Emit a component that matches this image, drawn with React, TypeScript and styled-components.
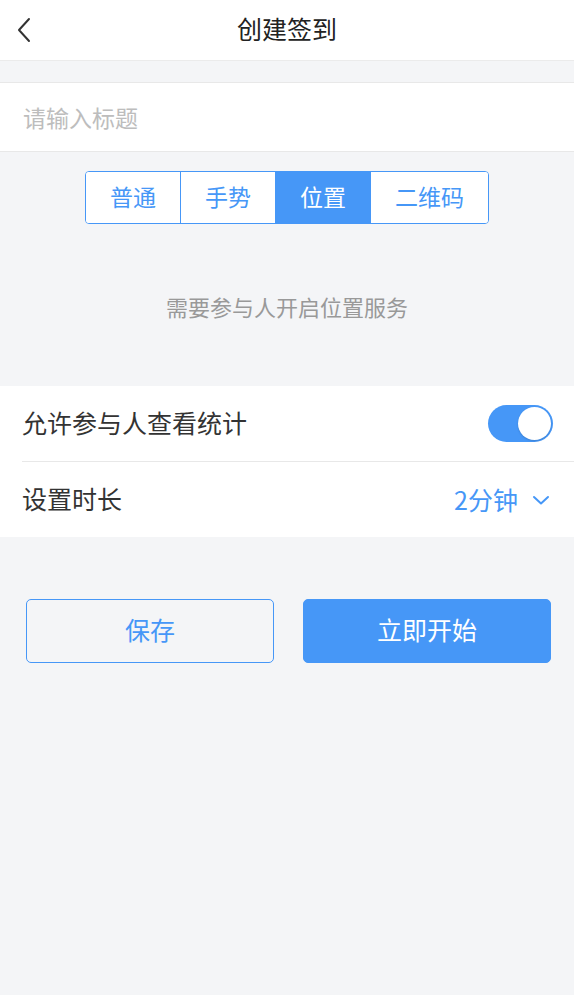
import React, { useState } from 'react';
import styled, { createGlobalStyle } from 'styled-components';

const GlobalStyle = createGlobalStyle`
  html, body {
    margin: 0;
    padding: 0;
    background: #f4f5f7;
    font-family: "Noto Sans CJK SC", "Noto Sans", sans-serif;
  }
`;

const BLUE = '#4697f7';

const tabs = ['普通', '手势', '位置', '二维码'];

const App: React.FC = () => {
  const [active, setActive] = useState(2);
  const [allowStats, setAllowStats] = useState(true);

  return (
    <Page>
      <GlobalStyle />
      <Header>
        <BackButton>
          <svg width="16" height="26" viewBox="0 0 16 26" fill="none">
            <path d="M13 2 L3 13 L13 24" stroke="#333" strokeWidth="2" strokeLinecap="round" strokeLinejoin="round" />
          </svg>
        </BackButton>
        <Title>创建签到</Title>
      </Header>

      <Spacer />

      <InputRow>
        <TitleInput placeholder="请输入标题" />
      </InputRow>

      <TabsWrap>
        <Segmented>
          {tabs.map((t, i) => (
            <Segment key={t} $active={i === active} onClick={() => setActive(i)}>
              {t}
            </Segment>
          ))}
        </Segmented>
      </TabsWrap>

      <Hint>需要参与人开启位置服务</Hint>

      <Section>
        <Row>
          <RowLabel>允许参与人查看统计</RowLabel>
          <Toggle $on={allowStats} onClick={() => setAllowStats(!allowStats)}>
            <Knob />
          </Toggle>
        </Row>
        <Row $last>
          <RowLabel>设置时长</RowLabel>
          <RowValue>
            2分钟
            <svg width="18" height="12" viewBox="0 0 18 12" fill="none">
              <path d="M2 3 L9 9.5 L16 3" stroke={BLUE} strokeWidth="2" strokeLinecap="round" strokeLinejoin="round" />
            </svg>
          </RowValue>
        </Row>
      </Section>

      <Actions>
        <Button>保存</Button>
        <Button $primary>立即开始</Button>
      </Actions>
    </Page>
  );
};

export default App;

const Page = styled.div`
  width: 574px;
  min-height: 995px;
  background: #f4f5f7;
`;

const Header = styled.div`
  position: relative;
  height: 60px;
  background: #fff;
  border-bottom: 1px solid #ebebeb;
  display: flex;
  align-items: center;
  justify-content: center;
`;

const BackButton = styled.div`
  position: absolute;
  left: 16px;
  top: 17px;
  width: 16px;
  height: 26px;
  display: flex;
`;

const Title = styled.div`
  font-size: 25px;
  line-height: 1;
  padding-bottom: 3px;
  color: #222;
`;

const Spacer = styled.div`
  height: 21px;
  border-bottom: 1px solid #e8e8e8;
`;

const InputRow = styled.div`
  height: 68px;
  background: #fff;
  border-bottom: 1px solid #e8e8e8;
  display: flex;
  align-items: center;
  padding: 0 23px;
`;

const TitleInput = styled.input`
  flex: 1;
  border: none;
  outline: none;
  background: transparent;
  font-family: inherit;
  font-size: 23px;
  color: #333;
  padding: 0;

  &::placeholder {
    color: #bdbdbd;
  }
`;

const TabsWrap = styled.div`
  display: flex;
  justify-content: center;
  padding-top: 19px;
`;

const Segmented = styled.div`
  display: flex;
  height: 53px;
  box-sizing: border-box;
  border: 1.5px solid ${BLUE};
  border-radius: 4px;
  overflow: hidden;
  background: #fff;
`;

const Segment = styled.div<{ $active: boolean }>`
  display: flex;
  align-items: center;
  justify-content: center;
  padding: 0 24px 2px;
  font-size: 23px;
  line-height: 1;
  color: ${p => (p.$active ? '#fff' : BLUE)};
  background: ${p => (p.$active ? BLUE : '#fff')};
  cursor: pointer;

  & + & {
    border-left: 1.5px solid ${BLUE};
  }
`;

const Hint = styled.div`
  height: 162px;
  display: flex;
  align-items: center;
  justify-content: center;
  padding-top: 2px;
  box-sizing: border-box;
  font-size: 22px;
  line-height: 1;
  color: #999;
`;

const Section = styled.div`
  background: #fff;
  padding-left: 22px;
`;

const Row = styled.div<{ $last?: boolean }>`
  height: 75px;
  display: flex;
  align-items: center;
  justify-content: space-between;
  padding-right: 21px;
  border-bottom: ${p => (p.$last ? 'none' : '1px solid #e8e8e8')};
`;

const RowLabel = styled.div`
  font-size: 25px;
  line-height: 1;
  padding-bottom: 2px;
  color: #333;
`;

const RowValue = styled.div`
  display: flex;
  align-items: center;
  gap: 14px;
  padding-right: 3px;
  font-size: 25px;
  line-height: 1;
  color: ${BLUE};
`;

const Toggle = styled.div<{ $on: boolean }>`
  width: 65px;
  height: 37px;
  border-radius: 19px;
  background: ${p => (p.$on ? BLUE : '#e5e5e5')};
  display: flex;
  align-items: center;
  justify-content: ${p => (p.$on ? 'flex-end' : 'flex-start')};
  padding: 2px;
  box-sizing: border-box;
  cursor: pointer;
`;

const Knob = styled.div`
  width: 33px;
  height: 33px;
  border-radius: 50%;
  background: #fff;
  box-shadow: 0 1px 2px rgba(0, 0, 0, 0.15);
`;

const Actions = styled.div`
  display: flex;
  gap: 29px;
  padding: 62px 23px 0 26px;
`;

const Button = styled.button<{ $primary?: boolean }>`
  flex: 1;
  height: 64px;
  padding: 0 0 4px;
  border-radius: 5px;
  font-family: inherit;
  font-size: 25px;
  border: 1.5px solid ${BLUE};
  background: ${p => (p.$primary ? BLUE : 'transparent')};
  color: ${p => (p.$primary ? '#fff' : BLUE)};
  cursor: pointer;
`;
